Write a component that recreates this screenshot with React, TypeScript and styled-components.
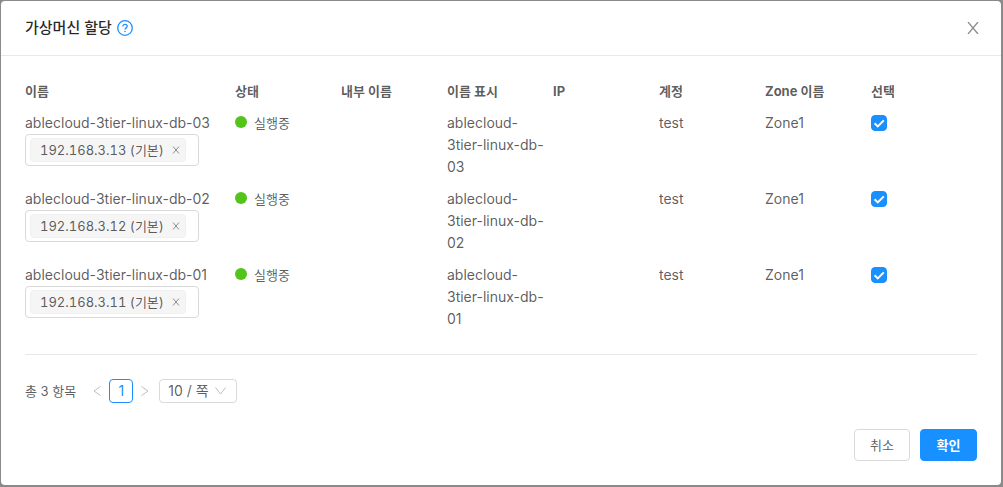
import React, { useState } from "react";
import styled, { createGlobalStyle, css } from "styled-components";

const GlobalStyle = createGlobalStyle`
  *, *::before, *::after { box-sizing: border-box; }
  body {
    margin: 0;
    background: #8a8a8a;
    color: rgba(0, 0, 0, 0.65);
    font-family: Inter, "Noto Sans CJK KR", sans-serif;
    font-size: 13px;
    line-height: 22px;
  }
  button, select, input { font: inherit; color: inherit; margin: 0; }
`;

const Backdrop = styled.div`
  min-height: 100vh;
  padding: 1px 2px 2px 1px;
`;

const Dialog = styled.section`
  display: flex;
  flex-direction: column;
  background: #fff;
  border-radius: 4px;
`;

const Header = styled.header`
  display: flex;
  align-items: center;
  gap: 5px;
  padding: 16px 20px 16px 24px;
  border-bottom: 1px solid #e8e8e8;
`;

const Title = styled.h1`
  margin: 0;
  font-size: 15px;
  font-weight: 500;
  line-height: 22px;
  color: rgba(0, 0, 0, 0.85);
`;

const IconButton = styled.button<{ $size: number; $color: string }>`
  display: inline-flex;
  align-items: center;
  justify-content: center;
  width: ${(p) => p.$size}px;
  height: ${(p) => p.$size}px;
  padding: 0;
  border: 0;
  background: none;
  color: ${(p) => p.$color};
  cursor: pointer;
`;

const CloseSlot = styled.div`
  display: flex;
  margin-left: auto;
`;

const Body = styled.div`
  padding: 19px 24px 24px;
`;

const Table = styled.table`
  width: 100%;
  table-layout: fixed;
  border-collapse: collapse;
`;

const cell = css`
  padding: 5px 0;
  text-align: left;
  vertical-align: top;
`;

const HeadCell = styled.th<{ $wide?: boolean }>`
  ${cell}
  width: ${(p) => (p.$wide ? "210px" : "auto")};
  font-weight: 700;
`;

const Cell = styled.td`
  ${cell}
  font-size: 14px;
`;

const Name = styled.div`
  white-space: nowrap;
`;

const TagBox = styled.div`
  display: flex;
  align-items: center;
  width: 174px;
  height: 32px;
  padding: 0 4px;
  border: 1px solid #d9d9d9;
  border-radius: 4px;
`;

const Tag = styled.span`
  display: inline-flex;
  align-items: center;
  justify-content: space-between;
  min-width: 156px;
  height: 24px;
  padding: 0 1px 0 9px;
  border: 1px solid #f0f0f0;
  border-radius: 4px;
  background: #f5f5f5;
  font-size: 13px;
  font-variant-numeric: tabular-nums;
  white-space: nowrap;
`;

const Status = styled.span`
  display: flex;
  align-items: center;
  gap: 7px;
  font-size: 13px;
`;

const Dot = styled.span`
  width: 12px;
  height: 12px;
  margin-bottom: 2px;
  border-radius: 50%;
  background: #52c41a;
`;

const CheckLabel = styled.label`
  display: inline-grid;
  width: 16px;
  height: 16px;
  margin-top: 3px;
  vertical-align: top;

  input, svg { grid-area: 1 / 1; }
  svg { pointer-events: none; }
`;

const CheckInput = styled.input`
  appearance: none;
  width: 16px;
  height: 16px;
  border: 1px solid #d9d9d9;
  border-radius: 4px;
  background: #fff;

  &:checked { border-color: #1890ff; background: #1890ff; }
`;

const Divider = styled.hr`
  margin: 19px 0 24px;
  border: 0;
  border-top: 1px solid #e8e8e8;
`;

const Pagination = styled.nav`
  display: flex;
  align-items: center;
  height: 24px;
`;

const Total = styled.span`
  margin-right: 9px;
`;

const PageButton = styled.button`
  width: 24px;
  height: 24px;
  padding: 0;
  border: 1px solid #1890ff;
  border-radius: 4px;
  background: #fff;
  color: #1890ff;
  font-size: 14px;
  line-height: 22px;
`;

const SizePicker = styled.label`
  display: grid;
  align-items: center;
  width: 78px;
  margin-left: 2px;

  select, svg { grid-area: 1 / 1; }
  svg { justify-self: end; margin-right: 11px; pointer-events: none; color: #bfbfbf; }
`;

const SizeSelect = styled.select`
  appearance: none;
  width: 100%;
  height: 24px;
  padding: 0 24px 0 8px;
  border: 1px solid #d9d9d9;
  border-radius: 4px;
  background: #fff;
  font-size: 14px;
`;

const Actions = styled.footer`
  display: flex;
  justify-content: flex-end;
  gap: 10px;
  margin-top: 26px;
`;

const Action = styled.button<{ $primary?: boolean }>`
  min-width: ${(p) => (p.$primary ? 57 : 56)}px;
  height: 32px;
  padding: 0 15px;
  border: 1px solid ${(p) => (p.$primary ? "#1890ff" : "#d9d9d9")};
  border-radius: 4px;
  background: ${(p) => (p.$primary ? "#1890ff" : "#fff")};
  color: ${(p) => (p.$primary ? "#fff" : "inherit")};
  font-weight: ${(p) => (p.$primary ? 700 : 400)};
  line-height: 20px;
  cursor: pointer;
`;

const Stroke = ({ d, w, h, width = 1 }: { d: string; w: number; h: number; width?: number }) => (
  <svg width={w} height={h} viewBox={`0 0 ${w} ${h}`} fill="none" stroke="currentColor" strokeWidth={width} aria-hidden="true">
    <path d={d} />
  </svg>
);

const HelpIcon = () => (
  <svg width="16" height="16" viewBox="0 0 16 16" fill="none" stroke="currentColor" strokeWidth="1.3" aria-hidden="true">
    <circle cx="8" cy="8" r="7.3" />
    <path d="M5.8 6.4C5.8 5.1 6.8 4.3 8 4.3s2.2.8 2.2 2c0 1.6-2.2 1.6-2.2 3.3" />
    <circle cx="8" cy="11.5" r=".8" fill="currentColor" stroke="none" />
  </svg>
);

const columns = ["이름", "상태", "내부 이름", "이름 표시", "IP", "계정", "Zone 이름", "선택"];

const machines = [
  { name: "ablecloud-3tier-linux-db-03", ip: "192.168.3.13" },
  { name: "ablecloud-3tier-linux-db-02", ip: "192.168.3.12" },
  { name: "ablecloud-3tier-linux-db-01", ip: "192.168.3.11" },
];

function MachineRow({ name, ip }: { name: string; ip: string }) {
  const [checked, setChecked] = useState(true);
  return (
    <tr>
      <Cell>
        <Name>{name}</Name>
        <TagBox>
          <Tag>
            {ip} (기본)
            <IconButton type="button" $size={16} $color="#8c8c8c" aria-label={`${ip} 제거`}>
              <Stroke w={8} h={8} d="M1 .5l6 7M7 .5l-6 7" />
            </IconButton>
          </Tag>
        </TagBox>
      </Cell>
      <Cell><Status><Dot />실행중</Status></Cell>
      <Cell />
      <Cell>{name}</Cell>
      <Cell />
      <Cell>test</Cell>
      <Cell>Zone1</Cell>
      <Cell>
        <CheckLabel>
          <CheckInput type="checkbox" aria-label={`${name} 선택`} checked={checked} onChange={(e) => setChecked(e.target.checked)} />
          {checked && (
            <svg width="16" height="16" viewBox="0 0 16 16" fill="none" stroke="#fff" strokeWidth="2" aria-hidden="true">
              <path d="M3.6 8.2l3.200 3.200 6-6" />
            </svg>
          )}
        </CheckLabel>
      </Cell>
    </tr>
  );
}

export default function App() {
  return (
    <>
      <GlobalStyle />
      <Backdrop>
        <Dialog role="dialog" aria-labelledby="dialog-title">
          <Header>
            <Title id="dialog-title">가상머신 할당</Title>
            <IconButton type="button" $size={16} $color="#1890ff" aria-label="도움말"><HelpIcon /></IconButton>
            <CloseSlot>
              <IconButton type="button" $size={16} $color="#8c8c8c" aria-label="닫기">
                <Stroke w={12} h={12} width={1.3} d="M1 0l10 12M11 0L1 12" />
              </IconButton>
            </CloseSlot>
          </Header>
          <Body>
            <Table>
              <thead>
                <tr>{columns.map((c, i) => <HeadCell key={c} scope="col" $wide={i === 0}>{c}</HeadCell>)}</tr>
              </thead>
              <tbody>{machines.map((m) => <MachineRow key={m.name} {...m} />)}</tbody>
            </Table>
            <Divider />
            <Pagination aria-label="페이지">
              <Total>총 3 항목</Total>
              <IconButton type="button" $size={24} $color="#bfbfbf" aria-label="이전">
                <Stroke w={8} h={10} d="M7.5 .5L1 5l6.500 4.500" />
              </IconButton>
              <PageButton type="button" aria-current="page">1</PageButton>
              <IconButton type="button" $size={24} $color="#bfbfbf" aria-label="다음">
                <Stroke w={8} h={10} d="M.5 .5L7 5L.5 9.500" />
              </IconButton>
              <SizePicker>
                <SizeSelect aria-label="페이지 크기" defaultValue="10">
                  <option value="10">10 / 쪽</option>
                </SizeSelect>
                <Stroke w={11} h={8} d="M.5 .5l5 6.500l5-6.500" />
              </SizePicker>
            </Pagination>
            <Actions>
              <Action type="button">취소</Action>
              <Action type="button" $primary>확인</Action>
            </Actions>
          </Body>
        </Dialog>
      </Backdrop>
    </>
  );
}
